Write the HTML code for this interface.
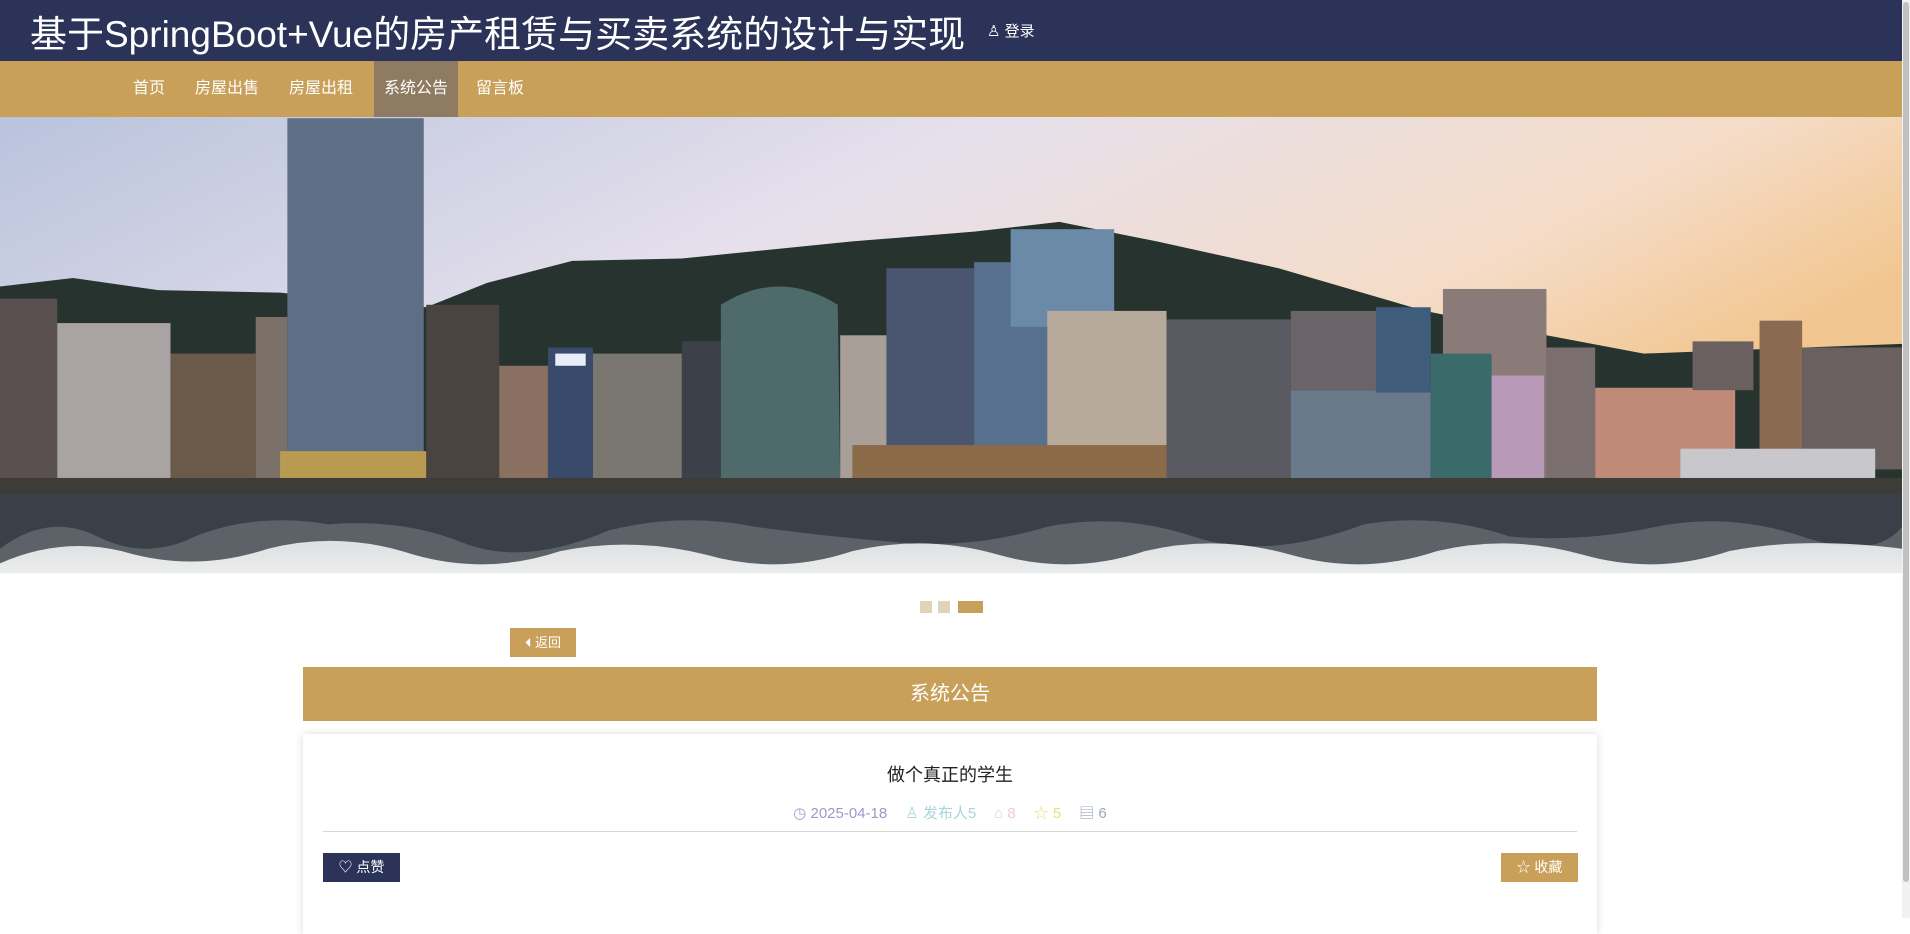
<!DOCTYPE html>
<html><head><meta charset="utf-8">
<style>
*{margin:0;padding:0;box-sizing:border-box}
body{width:1910px;height:918px;overflow:hidden;background:#fff;font-family:"Liberation Sans","Noto Sans CJK SC",sans-serif;position:relative}
.hdr{position:absolute;left:0;top:0;width:1902px;height:61px;background:#2b3358}
.hdr h1{position:absolute;left:30px;top:4px;font-size:37px;font-weight:normal;color:#fff;letter-spacing:0;white-space:nowrap}
.login{position:absolute;left:987px;top:20px;color:#fff;font-size:15px}
.nav{position:absolute;left:0;top:61px;width:1902px;height:56px;background:#c9a05a}
.nav a{position:absolute;top:0;height:56px;line-height:56px;color:#fff;font-size:16px;text-decoration:none;white-space:nowrap}
.nav a.on{background:#8f7a62;padding:0 10px}
.banner{position:absolute;left:0;top:117px;width:1902px;height:500px}
.sb{position:absolute;left:1902px;top:0;width:8px;height:918px;background:#f1f1f1}
.sb i{position:absolute;left:1px;top:2px;width:6px;height:880px;background:#c1c1c1;border-radius:3px}
.dots{position:absolute;top:601px;left:920px}
.dots span{position:absolute;top:0;height:12px;width:12px;background:#e0d4b8}
.back{position:absolute;left:510px;top:628px;width:66px;height:29px;background:#c9a05a;color:#fff;font-size:13px;line-height:29px;text-align:center}
.bar{position:absolute;left:303px;top:667px;width:1294px;height:54px;background:#c9a05a;color:#fff;font-size:20px;text-align:center;line-height:54px}
.card{position:absolute;left:303px;top:734px;width:1294px;height:200px;background:#fff;box-shadow:0 0 8px rgba(0,0,0,.15)}
.card h2{position:absolute;left:0;width:100%;top:27px;text-align:center;font-size:18px;font-weight:normal;color:#222}
.meta{position:absolute;left:0;width:100%;top:68px;text-align:center;font-size:15px;white-space:nowrap}
.meta span{margin:0 9px}
.line{position:absolute;left:20px;right:20px;top:97px;height:1px;background:#d8d8d8}
.btn{position:absolute;top:119px;height:29px;width:77px;color:#fff;font-size:14px;line-height:29px;text-align:center}
</style></head><body>
<div class="hdr"><h1>基于SpringBoot+Vue的房产租赁与买卖系统的设计与实现</h1><div class="login">♙ 登录</div></div>
<div class="nav">
<a style="left:133px">首页</a><a style="left:195px">房屋出售</a><a style="left:289px">房屋出租</a><a class="on" style="left:374px">系统公告</a><a style="left:476px">留言板</a>
</div>
<svg class="banner" viewBox="0 96 1562 410" preserveAspectRatio="none">
<defs>
<linearGradient id="sky" x1="0" y1="0" x2="1" y2="0.4"><stop offset="0" stop-color="#b9c3dc"/><stop offset="0.45" stop-color="#e6e0ec"/><stop offset="0.8" stop-color="#f5dcc8"/><stop offset="1" stop-color="#f2c690"/></linearGradient>
<linearGradient id="fade" x1="0" y1="0" x2="0" y2="1"><stop offset="0" stop-color="#fff" stop-opacity="0.8"/><stop offset="1" stop-color="#fff"/></linearGradient>
</defs>
<rect x="0" y="96" width="1562" height="320" fill="url(#sky)"/>
<path d="M0 235 L60 228 L130 238 L230 240 L350 252 L400 232 L470 214 L560 212 L700 198 L800 190 L870 182 L950 198 L1050 220 L1170 255 L1270 275 L1350 290 L1562 282 L1562 400 L0 400Z" fill="#27332f"/>
<g>
<rect x="0" y="245" width="47" height="150" fill="#5a5050"/>
<rect x="47" y="265" width="93" height="130" fill="#a9a3a4"/>
<rect x="140" y="290" width="70" height="105" fill="#6b5a4a"/>
<rect x="210" y="260" width="26" height="135" fill="#7a7068"/>
<rect x="236" y="97" width="112" height="298" fill="#5d6e85"/>
<rect x="350" y="250" width="60" height="145" fill="#4a4440"/>
<rect x="410" y="300" width="40" height="95" fill="#8a7060"/>
<rect x="450" y="285" width="37" height="110" fill="#3a4a6a"/>
<rect x="456" y="290" width="25" height="10" fill="#e8eef8"/>
<rect x="487" y="290" width="73" height="105" fill="#7a7670"/>
<rect x="560" y="280" width="32" height="115" fill="#3c4048"/>
<path d="M592 250 Q640 220 688 250 L690 395 L592 395Z" fill="#4f6a6a"/>
<rect x="690" y="275" width="38" height="120" fill="#a8a098"/>
<rect x="728" y="220" width="72" height="175" fill="#4a5670"/>
<rect x="800" y="215" width="60" height="180" fill="#56708e"/>
<rect x="830" y="188" width="85" height="80" fill="#6b8aa8"/>
<rect x="860" y="255" width="98" height="140" fill="#b8aa9a"/>
<rect x="958" y="262" width="102" height="133" fill="#5a5a62"/>
<rect x="1060" y="320" width="115" height="75" fill="#6a7a8a"/>
<rect x="1060" y="255" width="70" height="65" fill="#6a6468"/>
<rect x="1130" y="252" width="45" height="70" fill="#3f5c7a"/>
<rect x="1185" y="237" width="85" height="158" fill="#8a7a78"/>
<rect x="1175" y="290" width="50" height="105" fill="#3a6a6a"/>
<rect x="1225" y="308" width="43" height="87" fill="#b89ab8"/>
<rect x="1270" y="285" width="40" height="110" fill="#7a6e6e"/>
<rect x="1310" y="318" width="115" height="77" fill="#c08a78"/>
<rect x="1390" y="280" width="50" height="40" fill="#6a6060"/>
<rect x="1445" y="263" width="35" height="110" fill="#8a6a50"/>
<rect x="1480" y="285" width="82" height="100" fill="#6a6060"/>
<rect x="1380" y="368" width="160" height="27" fill="#c8c8cc"/>
<rect x="700" y="365" width="258" height="30" fill="#8a6a48"/>
<rect x="230" y="370" width="120" height="22" fill="#b89a50"/>
</g>
<rect x="0" y="392" width="1562" height="18" fill="#3e3c38"/>
<rect x="0" y="405" width="1562" height="60" fill="#3a4048"/>
<path d="M0 450 Q40 420 80 440 T160 440 Q210 420 270 430 Q330 425 380 445 T500 435 Q560 420 620 432 Q680 440 740 445 T860 432 Q920 420 980 440 T1120 430 Q1180 420 1240 440 Q1300 445 1360 432 Q1420 420 1480 440 T1562 432 L1562 470 L0 470Z" fill="#5c6268"/>
<path d="M0 462 Q50 440 100 452 Q160 470 220 450 Q280 435 340 455 Q400 472 460 452 Q520 440 580 455 Q640 472 700 452 Q760 438 820 455 Q880 472 940 452 Q1000 438 1060 455 Q1120 472 1180 452 Q1240 438 1300 455 Q1360 472 1420 452 Q1480 440 1562 450 L1562 510 L0 510Z" fill="url(#fade)"/>
</svg>
<div class="dots"><span style="left:0"></span><span style="left:18px"></span><span style="left:38px;width:25px;background:#c9a05a"></span></div>
<div class="back">⏴ 返回</div>
<div class="bar">系统公告</div>
<div class="card">
<h2>做个真正的学生</h2>
<div class="meta"><span style="color:#9a9ac8">◷ 2025-04-18</span><span style="color:#a8d4dc">♙ 发布人5</span><span style="color:#f4c8d8">⌂ 8</span><span style="color:#e8e080">☆ 5</span><span style="color:#9aa8b8">▤ 6</span></div>
<div class="line"></div>
<div class="btn" style="left:20px;background:#2b3358">♡ 点赞</div>
<div class="btn" style="left:1198px;background:#c9a05a">☆ 收藏</div>
</div>
<div class="sb"><i></i></div>
</body></html>
